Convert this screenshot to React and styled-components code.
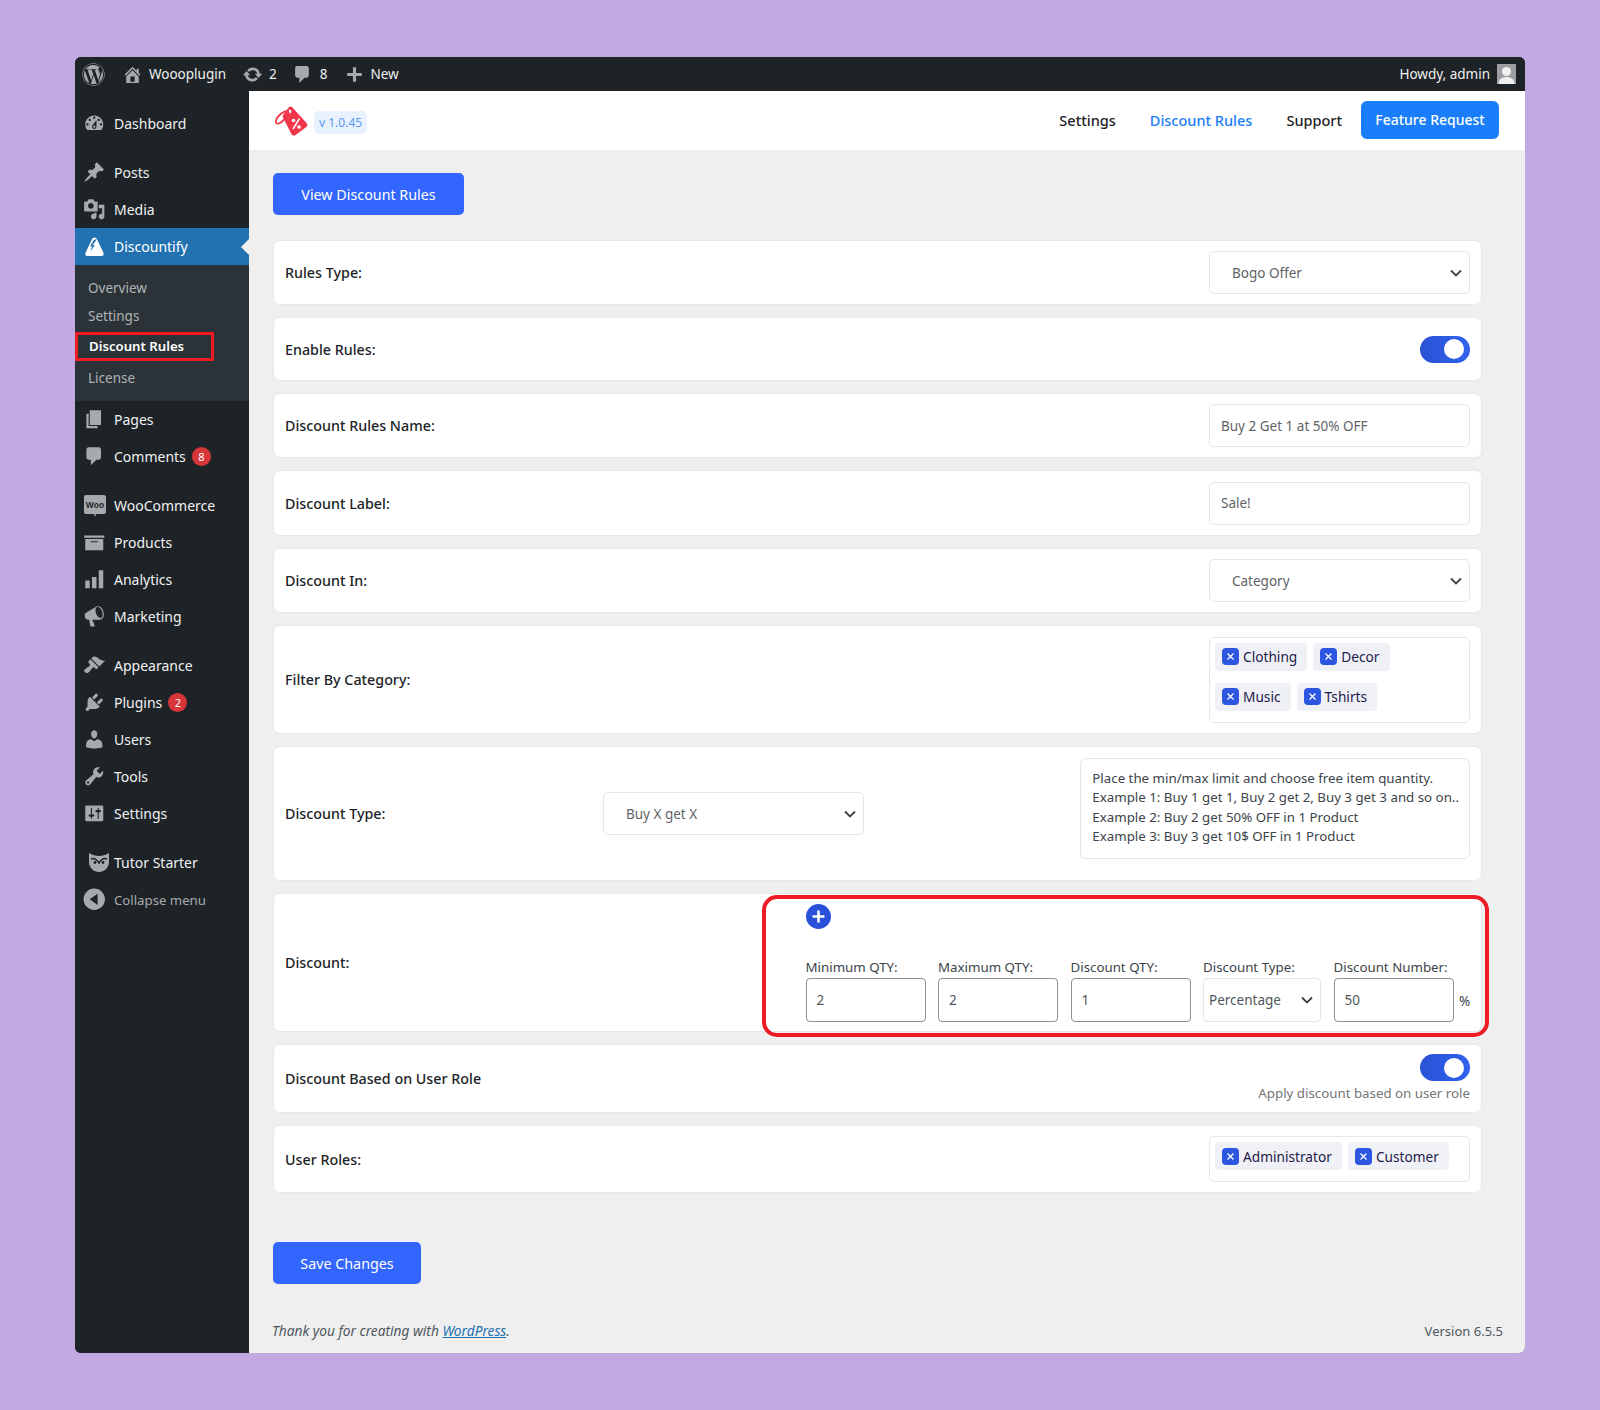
import React from 'react';
import styled, { createGlobalStyle } from 'styled-components';
import { FaWordpress } from 'react-icons/fa';

const Global = createGlobalStyle`
  html, body {
    margin: 0;
    padding: 0;
    background: #c2a9e1;
  }
  * {
    box-sizing: border-box;
  }
  body {
    font-family: "Noto Sans", "Open Sans", sans-serif;
    font-size: 14px;
    color: #1d2327;
  }
`;

const icons = {
  dashboard:
    'M3.76 16h12.48c1.1-1.37 1.76-3.11 1.76-5 0-4.42-3.58-8-8-8s-8 3.58-8 8c0 1.89.66 3.63 1.76 5zM10 4c.55 0 1 .45 1 1s-.45 1-1 1-1-.45-1-1 .45-1 1-1zM6 6c.55 0 1 .45 1 1s-.45 1-1 1-1-.45-1-1 .45-1 1-1zm8 0c.55 0 1 .45 1 1s-.45 1-1 1-1-.45-1-1 .45-1 1-1zm-5.37 5.55L12 7v6c0 1.1-.9 2-2 2s-2-.9-2-2c0-.57.24-1.08.63-1.45zM4 10c.55 0 1 .45 1 1s-.45 1-1 1-1-.45-1-1 .45-1 1-1zm12 0c.55 0 1 .45 1 1s-.45 1-1 1-1-.45-1-1 .45-1 1-1zm-5 3c0-.55-.45-1-1-1s-1 .45-1 1 .45 1 1 1 1-.45 1-1z',
  post: 'M10.44 3.02l1.82-1.82 6.36 6.35-1.83 1.82c-1.05-.68-2.48-.57-3.41.36l-.75.75c-.92.93-1.04 2.35-.35 3.41l-1.83 1.82-2.41-2.41-2.8 2.79c-.42.42-3.38 2.71-3.8 2.29s1.86-3.39 2.28-3.81l2.79-2.79L4.1 9.36l1.83-1.82c1.05.69 2.48.57 3.4-.36l.75-.75c.93-.92 1.05-2.35.36-3.41z',
  media:
    'M13 11V4c0-.55-.45-1-1-1h-1.67L9 1H5L3.67 3H2c-.55 0-1 .45-1 1v7c0 .55.45 1 1 1h10c.55 0 1-.45 1-1zM7 4.5c1.38 0 2.5 1.12 2.5 2.5S8.38 9.5 7 9.5 4.5 8.38 4.5 7 5.62 4.5 7 4.5zM14 6h5v10.5c0 1.38-1.12 2.5-2.5 2.5S14 17.88 14 16.5s1.12-2.5 2.5-2.5c.17 0 .34.02.5.05V9h-3V6zm-4 8.05V13h2v3.5c0 1.38-1.12 2.5-2.5 2.5S7 17.88 7 16.5 8.12 14 9.5 14c.17 0 .34.02.5.05z',
  pages: 'M6 15V2h10v13H6zm-1 1h8v2H3V5h2v11z',
  comments: 'M5 2h9c1.1 0 2 .9 2 2v7c0 1.1-.9 2-2 2h-2l-5 5v-5H5c-1.1 0-2-.9-2-2V4c0-1.1.9-2 2-2z',
  archive: 'M19 4v2H1V4h18zM2 7h16v10H2V7zm11 3V9H7v1h6z',
  analytics: 'M2 11h4v7H2zM8 8h4v10H8zM14 2h4v16h-4z',
  megaphone:
    'M18.15 5.94c.46 1.62.38 3.22-.02 4.48-.42 1.28-1.26 2.18-2.3 2.48-.16.06-.26.06-.4.06-.06.02-.12.02-.18.02-.06.02-.14.02-.22.02h-6.8l2.22 5.5c.02.14-.06.26-.14.34-.08.1-.24.16-.34.16H6.95c-.1 0-.26-.06-.34-.16-.08-.08-.16-.2-.14-.34l-1-5.5H4.25l-.02-.02c-.5.06-1.08-.18-1.54-.62s-.88-1.08-1.06-1.88c-.24-.8-.2-1.56-.02-2.2.18-.62.58-1.08 1.06-1.3l.02-.02 9-5.4c.1-.06.18-.1.24-.16.06-.04.14-.08.24-.12.16-.08.28-.12.5-.18 1.04-.3 2.24.1 3.22 1 .98.88 1.78 2.24 2.26 3.86zm-2.58 5.98h-.02c.4-.1.74-.34 1.04-.7.58-.7.86-1.76.86-3.04-.02-.64-.12-1.3-.3-1.98-.45-1.59-1.26-2.93-2.25-3.77-.41-.35-.82-.6-1.25-.7-.31-.08-.62-.09-.9-.02-.8.24-1.35 1-1.55 2.02-.17.89-.11 1.98.2 3.1.46 1.6 1.29 2.96 2.26 3.78.42.33.85.55 1.29.64.22.04.43.05.62-.03z',
  brush:
    'M14.48 11.06L7.41 3.99l1.5-1.5c.5-.56 2.3-.47 3.51.32 1.21.8 1.43 1.28 2.91 2.1 1.18.64 2.45 1.26 4.45.85zm-.71.71L6.7 4.7 4.93 6.47c-.39.39-.39 1.02 0 1.41l1.06 1.06c.39.39.39 1.03 0 1.42-.6.6-1.43 1.11-2.21 1.69-.35.26-.7.53-1.01.84C1.43 13.23.4 14.98 1.72 16.3c1.33 1.33 3.08.3 4.42-1.05.31-.31.58-.65.84-1 .57-.78 1.09-1.61 1.69-2.21.39-.39 1.02-.39 1.41 0l1.06 1.06c.39.39 1.02.39 1.41 0z',
  plugin:
    'M13.11 4.36L9.87 7.6 8 5.73l3.24-3.24c.35-.34 1.05-.2 1.56.32.52.51.66 1.21.31 1.55zm-8 1.77l.91-1.12 9.01 9.01-1.19.84c-.71.71-2.63 1.16-3.82 1.16H6.14L4.9 17.26c-.59.59-1.54.59-2.12 0-.59-.58-.59-1.53 0-2.12l1.24-1.24v-3.88c0-1.13.4-3.19 1.09-3.89zm7.26 3.97l3.24-3.24c.34-.35 1.04-.21 1.55.31.52.51.66 1.21.31 1.55l-3.24 3.25z',
  users:
    'M10 9.25c-2.27 0-2.73-3.44-2.73-3.44C7 4.02 7.82 2 9.97 2c2.16 0 2.98 2.02 2.71 3.81 0 0-.41 3.44-2.68 3.44zm0 2.57L12.72 10c2.39 0 4.52 2.33 4.52 4.53v2.49s-3.65 1.13-7.24 1.13c-3.65 0-7.24-1.13-7.24-1.13v-2.49c0-2.25 1.94-4.48 4.47-4.48z',
  tools:
    'M16.68 9.77c-1.34 1.34-3.3 1.67-4.95.99l-5.41 6.52c-.99.99-2.59.99-3.58 0s-.99-2.59 0-3.57l6.52-5.42c-.68-1.65-.35-3.61.99-4.95 1.28-1.28 3.12-1.62 4.72-1.06l-2.89 2.89 2.82 2.82 2.86-2.87c.53 1.58.18 3.39-1.08 4.65zM3.81 16.21c.4.39 1.04.39 1.43 0 .4-.4.4-1.04 0-1.43-.39-.4-1.03-.4-1.43 0-.39.39-.39 1.03 0 1.43z',
  settings:
    'M18 16V4c0-.55-.45-1-1-1H3c-.55 0-1 .45-1 1v12c0 .55.45 1 1 1h14c.55 0 1-.45 1-1zM8 11h1c.55 0 1 .45 1 1s-.45 1-1 1H8v1.5c0 .28-.22.5-.5.5s-.5-.22-.5-.5V13H6c-.55 0-1-.45-1-1s.45-1 1-1h1V5.5c0-.28.22-.5.5-.5s.5.22.5.5V11zm5-2h-1c-.55 0-1-.45-1-1s.45-1 1-1h1V5.5c0-.28.22-.5.5-.5s.5.22.5.5V7h1c.55 0 1 .45 1 1s-.45 1-1 1h-1v5.5c0 .28-.22.5-.5.5s-.5-.22-.5-.5V9z',
  collapse: 'M10 .5a9.5 9.5 0 1 1 0 19 9.5 9.5 0 0 1 0-19zM13 5l-7 5 7 5z',
  home: 'M16 8.5l1.53 1.53-1.06 1.06L10 4.62l-6.47 6.47-1.06-1.06L10 2.5l4 4v-2h2v4zm-6-2.46l6 5.99V18H4v-6.03zM12 17v-5H8v5h4z',
  update:
    'M10.2 3.28c3.53 0 6.43 2.61 6.92 6h2.08l-3.5 4-3.5-4h2.32c-.45-1.97-2.21-3.44-4.32-3.44-1.45 0-2.73.71-3.54 1.78L4.95 5.66C6.23 4.2 8.11 3.28 10.2 3.28zm-.4 13.44c-3.52 0-6.43-2.61-6.92-6H.8l3.5-4c1.17 1.33 2.33 2.67 3.5 4H5.48c.45 1.97 2.21 3.44 4.32 3.44 1.45 0 2.73-.71 3.54-1.78l1.71 1.95c-1.28 1.46-3.15 2.39-5.25 2.39z',
  plus: 'M17 8.5v3h-5.5V17h-3v-5.5H3v-3h5.5V3h3v5.5z',
};

const Dashicon = ({ name, size = 22.5, color = 'currentColor' }) => (
  <svg width={size} height={size} viewBox="0 0 20 20" fill={color} fillRule="evenodd">
    <path d={icons[name]} />
  </svg>
);

const MountainIcon = () => (
  <svg width="21" height="21" viewBox="0 0 20 20">
    <path d="M10 1.500c1.500 0 2.200 1 2.800 2.200L18.500 16c.7 1.500 0 3-1.600 3H3.100c-1.600 0-2.300-1.500-1.600-3L7.200 3.700C7.800 2.500 8.500 1.500 10 1.500z" fill="#fff" />
    <path d="M12.300 3L8 8.800l2.400-.3-4.300 6.300 1.600-5-2.100.2L9.500 3.500z" fill="#2271b1" />
  </svg>
);

const WooIcon = () => (
  <svg width="22" height="23" viewBox="0 0 22 23">
    <path d="M2 1h18c1.100 0 2 .9 2 2v15c0 1.100-.9 2-2 2h-8l-1 3-1-3H2c-1.100 0-2-.9-2-2V3c0-1.100.9-2 2-2z" fill="#a7aaad" />
    <text x="11" y="13.500" textAnchor="middle" fontSize="8.500" fontWeight="700" fill="#1d2327" fontFamily="Liberation Sans, sans-serif">
      Woo
    </text>
  </svg>
);

const OwlIcon = () => (
  <svg width="22" height="21" viewBox="0 0 22 21">
    <path d="M1 1c3 2 7 3 10 3s7-1 10-3v9c0 6-5 10-10 10S1 16 1 10z" fill="#a7aaad" />
    <path d="M3 7c3-1.500 6 1 8 4 2-3 5-5.500 8-4" fill="none" stroke="#1d2327" strokeWidth="1.500" />
    <circle cx="7" cy="10.500" r="1.400" fill="#1d2327" />
    <circle cx="15" cy="10.500" r="1.400" fill="#1d2327" />
  </svg>
);

const TagLogo = () => (
  <svg width="34" height="33" viewBox="0 0 34 33">
    <path d="M9.500 10.500L14.500 3.500c.8-1.200 2.400-1.300 3.500-.5l14.500 16c1.200 1.400 1 3.300-.5 4.300L21.500 31c-1.500 1-3.300.6-4.100-1L9 13.500c-.4-1-.2-2 .5-3z" fill="#f0344a" />
    <circle cx="15.500" cy="7.500" r="1.900" fill="#fff" />
    <path d="M15 7C10 6 3 12 1.800 17c-.6 2.700 2 3.300 4.200 2 3-1.800 6.500-6 9-11" fill="none" stroke="#f0344a" strokeWidth="1.700" />
    <circle cx="19.500" cy="16.500" r="1.800" fill="#fff" />
    <circle cx="25" cy="23" r="1.800" fill="#fff" />
    <path d="M25.500 14.500L19 25" stroke="#fff" strokeWidth="1.500" />
  </svg>
);

const AvatarIcon = () => (
  <svg width="19" height="20" viewBox="0 0 19 20">
    <rect width="19" height="20" fill="#9c9ea1" />
    <circle cx="9.500" cy="7.500" r="4.500" fill="#f0f0f1" />
    <path d="M1.500 20c0-5 3.500-7 8-7s8 2 8 7z" fill="#f0f0f1" />
  </svg>
);

const Page = styled.div`
  padding: 57px 75px 57px 75px;
`;

const Window = styled.div`
  display: flex;
  flex-direction: column;
  height: 1296px;
  border-radius: 6px;
  background: #1d2327;
`;

const AdminBar = styled.header`
  display: flex;
  align-items: center;
  flex: 0 0 34px;
  padding: 0 9px 0 7px;
  color: #f0f0f1;
  font-size: 13.500px;
  border-radius: 6px 6px 0 0;
  background: #1d2327;
`;

const BarItem = styled.span`
  display: flex;
  align-items: center;
  gap: ${(p) => p.$gap || 7}px;
  margin-left: ${(p) => p.$left || 0}px;
  color: #f0f0f1;

  svg {
    color: #a7aaad;
  }
`;

const BarSpacer = styled.span`
  flex: 1;
`;

const Body = styled.div`
  display: flex;
  flex: 1;
  min-height: 0;
`;

const Sidebar = styled.nav`
  flex: 0 0 174px;
  padding-top: 14px;
  background: #1d2327;
  border-radius: 0 0 0 6px;
`;

const MenuGroup = styled.div`
  margin-bottom: 12px;
`;

const MenuItem = styled.div`
  position: relative;
  display: flex;
  align-items: center;
  height: 37px;
  font-size: ${(p) => (p.$muted ? 13.2 : 14)}px;
  color: ${(p) => (p.$muted ? '#a7aaad' : '#f0f0f1')};
  background: ${(p) => (p.$active ? '#2271b1' : 'transparent')};

  ${(p) =>
    p.$active &&
    `
    color: #fff;
    &::after {
      content: '';
      position: absolute;
      right: 0;
      top: 50%;
      margin-top: -8px;
      border: 8px solid transparent;
      border-right-color: #f0f0f1;
      border-left: 0;
    }
  `}
`;

const MenuIcon = styled.span`
  display: flex;
  align-items: center;
  justify-content: center;
  flex: 0 0 39px;
  padding-left: ${(p) => p.$shift || 0}px;
  color: ${(p) => (p.$active ? '#fff' : '#a7aaad')};
`;

const Badge = styled.span`
  display: inline-flex;
  align-items: center;
  justify-content: center;
  width: 19px;
  height: 19px;
  margin-left: 6px;
  border-radius: 50%;
  background: #d63638;
  color: #fff;
  font-size: 11px;
`;

const SubMenu = styled.div`
  padding: 9px 0 9px;
  background: #2c3338;
`;

const SubItem = styled.div`
  display: flex;
  align-items: center;
  height: ${(p) => p.$h || 28}px;
  margin-top: ${(p) => p.$top || 0}px;
  padding-left: 13px;
  font-size: 13.500px;
  color: #b0b3b6;
`;

const SubItemCurrent = styled.div`
  display: flex;
  align-items: center;
  width: 139px;
  height: 29px;
  margin-top: 2px;
  padding: 0 0 2px 11px;
  border: 3px solid #ed1c24;
  color: #fff;
  font-size: 13.200px;
  font-weight: 600;
`;

const Main = styled.main`
  display: flex;
  flex-direction: column;
  flex: 1;
  min-width: 0;
  background: #efefef;
  border-radius: 0 0 6px 0;
`;

const TopNav = styled.div`
  display: flex;
  align-items: center;
  flex: 0 0 59px;
  padding: 0 26px 0 25px;
  background: #fff;
`;

const Version = styled.span`
  margin: 4px 0 0 6px;
  padding: 3px 5px;
  border-radius: 5px;
  background: #e8f2fe;
  color: #5b9bef;
  font-size: 12px;
  line-height: 17px;
`;

const NavLink = styled.a`
  margin: 0 0 2px ${(p) => p.$left}px;
  color: ${(p) => (p.$current ? '#1a7efb' : '#1d2327')};
  font-size: 14.500px;
  font-weight: 500;
`;

const FeatureButton = styled.a`
  display: flex;
  align-items: center;
  justify-content: center;
  width: 138px;
  height: 38px;
  margin: 0 0 2px 19px;
  border-radius: 6px;
  background: #1a7efb;
  color: #fff;
  font-size: 14px;
  font-weight: 500;
`;

const Content = styled.div`
  padding: 23px 43px 0 24px;
`;

const PrimaryButton = styled.button`
  display: block;
  width: ${(p) => p.$w}px;
  height: 42px;
  padding: 0;
  border: 0;
  border-radius: 5px;
  background: #3366ff;
  color: #fff;
  font-family: inherit;
  font-size: 14.300px;
`;

const Rows = styled.div`
  display: flex;
  flex-direction: column;
  gap: 12px;
  margin: 25px 0 49px;
`;

const Card = styled.section`
  position: relative;
  display: flex;
  align-items: center;
  height: ${(p) => p.$h}px;
  padding: 0 11px;
  border: 1px solid #e8e8e8;
  border-radius: 7px;
  background: #fff;
`;

const Label = styled.label`
  flex: ${(p) => (p.$w ? `0 0 ${p.$w}px` : 1)};
  color: #1d2327;
  font-size: 14.300px;
  font-weight: 500;
`;

const Control = styled.div`
  display: flex;
  align-items: center;
  flex: 0 0 261px;
  height: 43px;
  padding-left: ${(p) => p.$pad}px;
  border: 1px solid #e6e6e6;
  border-radius: 5px;
  background: #fff;
  color: #5f6368;
  font-size: 13.500px;
`;

const Chevron = ({ right = 5 }) => (
  <ChevronSvg viewBox="0 0 16 16" $right={right}>
    <path d="M3 5.500l5 5 5-5" fill="none" stroke="#3c434a" strokeWidth="1.800" />
  </ChevronSvg>
);

const ChevronSvg = styled.svg`
  width: 16px;
  height: 16px;
  margin-left: auto;
  margin-right: ${(p) => p.$right}px;
`;

const Toggle = styled.span`
  position: relative;
  display: block;
  flex: 0 0 auto;
  width: 50px;
  height: 27px;
  border-radius: 14px;
  background: linear-gradient(90deg, #2a52d4, #2f62ee);

  &::after {
    content: '';
    position: absolute;
    top: 3.500px;
    right: 6px;
    width: 20px;
    height: 20px;
    border-radius: 50%;
    background: #fff;
  }
`;

const TagBox = styled.div`
  display: flex;
  flex-wrap: wrap;
  align-content: flex-start;
  gap: 12px 6px;
  flex: 0 0 261px;
  height: ${(p) => p.$h}px;
  padding: 5px 5px;
  border: 1px solid #e6e6e6;
  border-radius: 5px;
`;

const Tag = styled.span`
  display: inline-flex;
  align-items: center;
  gap: 4px;
  height: 28px;
  padding: 0 10px 0 7px;
  border-radius: 4px;
  background: #f0f1f6;
  color: #1e1b4b;
  font-size: 13.700px;
`;

const TagClose = styled.span`
  display: flex;
  align-items: center;
  justify-content: center;
  width: 17px;
  height: 17px;
  border-radius: 4px;
  background: #2c55e0;
`;

const XMark = () => (
  <svg width="9" height="9" viewBox="0 0 9 9">
    <path d="M1.500 1.500l6 6M7.500 1.500l-6 6" stroke="#fff" strokeWidth="1.300" />
  </svg>
);

const Note = styled.div`
  flex: 0 0 389px;
  margin: -11px 0 0 auto;
  height: 101px;
  padding: 10px 10px 10px 11px;
  border: 1px solid #e6e6e6;
  border-radius: 6px;
  color: #3c434a;
  font-size: 13.300px;
  line-height: 19.500px;
  white-space: nowrap;
`;

const QtyPanel = styled.div`
  display: flex;
  flex-direction: column;
  align-items: flex-start;
  margin-left: auto;
`;

const AddButton = styled.span`
  display: flex;
  align-items: center;
  justify-content: center;
  width: 25px;
  height: 25px;
  margin-bottom: 29px;
  border-radius: 50%;
  background: #2850d8;
`;

const QtyFields = styled.div`
  display: flex;
  align-items: flex-end;
  gap: 12.500px;
`;

const Field = styled.div`
  width: ${(p) => p.$w}px;
  color: #3c434a;
  font-size: 13.300px;
  line-height: 18px;
  white-space: nowrap;
`;

const FieldLabel = styled.div`
  margin-bottom: 2px;
`;

const QtyInput = styled.div`
  display: flex;
  align-items: center;
  height: 44px;
  padding-left: ${(p) => p.$pad || 10}px;
  border: 1px solid ${(p) => (p.$soft ? '#e6e6e6' : '#8c8f94')};
  border-radius: 4px;
  background: #fff;
  color: #50575e;
  font-size: 13.500px;
`;

const Percent = styled.span`
  width: 11px;
  margin-left: -7px;
  padding-bottom: 12px;
  color: #3c434a;
  font-size: 13.500px;
`;

const RedFrame = styled.span`
  position: absolute;
  left: 488px;
  top: 1px;
  right: -8px;
  bottom: -6px;
  border: 4px solid #ed1c24;
  border-radius: 15px;
  pointer-events: none;
`;

const RoleSide = styled.div`
  display: flex;
  flex-direction: column;
  align-items: flex-end;
  gap: 3px;
  margin-bottom: 1px;
`;

const Hint = styled.span`
  color: #757575;
  font-size: 13.300px;
  line-height: 18px;
`;

const Footer = styled.footer`
  display: flex;
  justify-content: space-between;
  margin-top: auto;
  padding: 0 22px 13px 23px;
  color: #50575e;
  font-size: 13px;
  line-height: 18px;
`;

const Thanks = styled.em`
  font-size: 13.700px;

  a {
    color: #2271b1;
    text-decoration: underline;
  }
`;

const menuGroups = [
  [{ icon: 'dashboard', label: 'Dashboard' }],
  [
    { icon: 'post', label: 'Posts' },
    { icon: 'media', label: 'Media' },
  ],
];

const lowerGroups = [
  [
    { icon: 'archive', label: 'Products', first: <WooIcon />, firstLabel: 'WooCommerce' },
    { icon: 'analytics', label: 'Analytics' },
    { icon: 'megaphone', label: 'Marketing' },
  ],
  [
    { icon: 'brush', label: 'Appearance' },
    { icon: 'plugin', label: 'Plugins', badge: 2 },
    { icon: 'users', label: 'Users' },
    { icon: 'tools', label: 'Tools' },
    { icon: 'settings', label: 'Settings' },
  ],
];

const qtyFields = [
  { label: 'Minimum QTY:', value: '2' },
  { label: 'Maximum QTY:', value: '2' },
  { label: 'Discount QTY:', value: '1' },
];

const SidebarItem = ({ icon, label, badge, custom, shift }) => (
  <MenuItem>
    <MenuIcon $shift={shift}>{custom || <Dashicon name={icon} />}</MenuIcon>
    {label}
    {badge && <Badge>{badge}</Badge>}
  </MenuItem>
);

const TagItem = ({ children }) => (
  <Tag>
    <TagClose>
      <XMark />
    </TagClose>
    {children}
  </Tag>
);

const App = () => {
  return (
    <Page>
      <Global />
      <Window>
        <AdminBar>
          <FaWordpress size={23} color="#a7aaad" />
          <BarItem $left={17} $gap={6}>
            <Dashicon name="home" size={21} />
            Woooplugin
          </BarItem>
          <BarItem $left={16} $gap={6}>
            <Dashicon name="update" size={21} />2
          </BarItem>
          <BarItem $left={15} $gap={7}>
            <Dashicon name="comments" size={21} />8
          </BarItem>
          <BarItem $left={16} $gap={6}>
            <Dashicon name="plus" size={21} />
            New
          </BarItem>
          <BarSpacer />
          <BarItem $gap={7}>
            Howdy, admin
            <AvatarIcon />
          </BarItem>
        </AdminBar>
        <Body>
          <Sidebar>
            {menuGroups.map((group, i) => (
              <MenuGroup key={i}>
                {group.map((item) => (
                  <SidebarItem key={item.label} {...item} />
                ))}
                {i === 1 && (
                  <>
                    <MenuItem $active>
                      <MenuIcon $active>
                        <MountainIcon />
                      </MenuIcon>
                      Discountify
                    </MenuItem>
                    <SubMenu>
                      <SubItem>Overview</SubItem>
                      <SubItem>Settings</SubItem>
                      <SubItemCurrent>Discount Rules</SubItemCurrent>
                      <SubItem $h={29} $top={2}>
                        License
                      </SubItem>
                    </SubMenu>
                    <SidebarItem icon="pages" label="Pages" />
                    <SidebarItem icon="comments" label="Comments" badge={8} />
                  </>
                )}
              </MenuGroup>
            ))}
            {lowerGroups.map((group, i) => (
              <MenuGroup key={i}>
                {group[0].first && <SidebarItem custom={group[0].first} label={group[0].firstLabel} />}
                {group.map((item) => (
                  <SidebarItem key={item.label} icon={item.icon} label={item.label} badge={item.badge} />
                ))}
              </MenuGroup>
            ))}
            <SidebarItem custom={<OwlIcon />} label="Tutor Starter" shift={8} />
            <MenuItem $muted>
              <MenuIcon>
                <Dashicon name="collapse" />
              </MenuIcon>
              Collapse menu
            </MenuItem>
          </Sidebar>
          <Main>
            <TopNav>
              <TagLogo />
              <Version>v 1.0.45</Version>
              <BarSpacer />
              <NavLink $left={0}>Settings</NavLink>
              <NavLink $left={34} $current>
                Discount Rules
              </NavLink>
              <NavLink $left={34}>Support</NavLink>
              <FeatureButton>Feature Request</FeatureButton>
            </TopNav>
            <Content>
              <PrimaryButton $w={191}>View Discount Rules</PrimaryButton>
              <Rows>
                <Card $h={65}>
                  <Label>Rules Type:</Label>
                  <Control $pad={22}>
                    Bogo Offer
                    <Chevron />
                  </Control>
                </Card>
                <Card $h={64}>
                  <Label>Enable Rules:</Label>
                  <Toggle />
                </Card>
                <Card $h={65}>
                  <Label>Discount Rules Name:</Label>
                  <Control $pad={11}>Buy 2 Get 1 at 50% OFF</Control>
                </Card>
                <Card $h={66}>
                  <Label>Discount Label:</Label>
                  <Control $pad={11}>Sale!</Control>
                </Card>
                <Card $h={65}>
                  <Label>Discount In:</Label>
                  <Control $pad={22}>
                    Category
                    <Chevron />
                  </Control>
                </Card>
                <Card $h={109}>
                  <Label>Filter By Category:</Label>
                  <TagBox $h={86}>
                    <TagItem>Clothing</TagItem>
                    <TagItem>Decor</TagItem>
                    <TagItem>Music</TagItem>
                    <TagItem>Tshirts</TagItem>
                  </TagBox>
                </Card>
                <Card $h={135}>
                  <Label $w={318}>Discount Type:</Label>
                  <Control $pad={22}>
                    Buy X get X
                    <Chevron />
                  </Control>
                  <Note>
                    Place the min/max limit and choose free item quantity.
                    <br />
                    Example 1: Buy 1 get 1, Buy 2 get 2, Buy 3 get 3 and so on..
                    <br />
                    Example 2: Buy 2 get 50% OFF in 1 Product
                    <br />
                    Example 3: Buy 3 get 10$ OFF in 1 Product
                  </Note>
                </Card>
                <Card $h={139}>
                  <Label $w={300}>Discount:</Label>
                  <QtyPanel>
                    <AddButton>
                      <Dashicon name="plus" size={17} color="#fff" />
                    </AddButton>
                    <QtyFields>
                      {qtyFields.map((field) => (
                        <Field $w={120} key={field.label}>
                          <FieldLabel>{field.label}</FieldLabel>
                          <QtyInput>{field.value}</QtyInput>
                        </Field>
                      ))}
                      <Field $w={118}>
                        <FieldLabel>Discount Type:</FieldLabel>
                        <QtyInput $soft $pad={5}>
                          Percentage
                          <Chevron right={5} />
                        </QtyInput>
                      </Field>
                      <Field $w={120}>
                        <FieldLabel>Discount Number:</FieldLabel>
                        <QtyInput>50</QtyInput>
                      </Field>
                      <Percent>%</Percent>
                    </QtyFields>
                  </QtyPanel>
                  <RedFrame />
                </Card>
                <Card $h={69}>
                  <Label>Discount Based on User Role</Label>
                  <RoleSide>
                    <Toggle />
                    <Hint>Apply discount based on user role</Hint>
                  </RoleSide>
                </Card>
                <Card $h={68}>
                  <Label>User Roles:</Label>
                  <TagBox $h={46}>
                    <TagItem>Administrator</TagItem>
                    <TagItem>Customer</TagItem>
                  </TagBox>
                </Card>
              </Rows>
              <PrimaryButton $w={148}>Save Changes</PrimaryButton>
            </Content>
            <Footer>
              <Thanks>
                Thank you for creating with <a>WordPress</a>.
              </Thanks>
              <span>Version 6.5.5</span>
            </Footer>
          </Main>
        </Body>
      </Window>
    </Page>
  );
};

export default App;
